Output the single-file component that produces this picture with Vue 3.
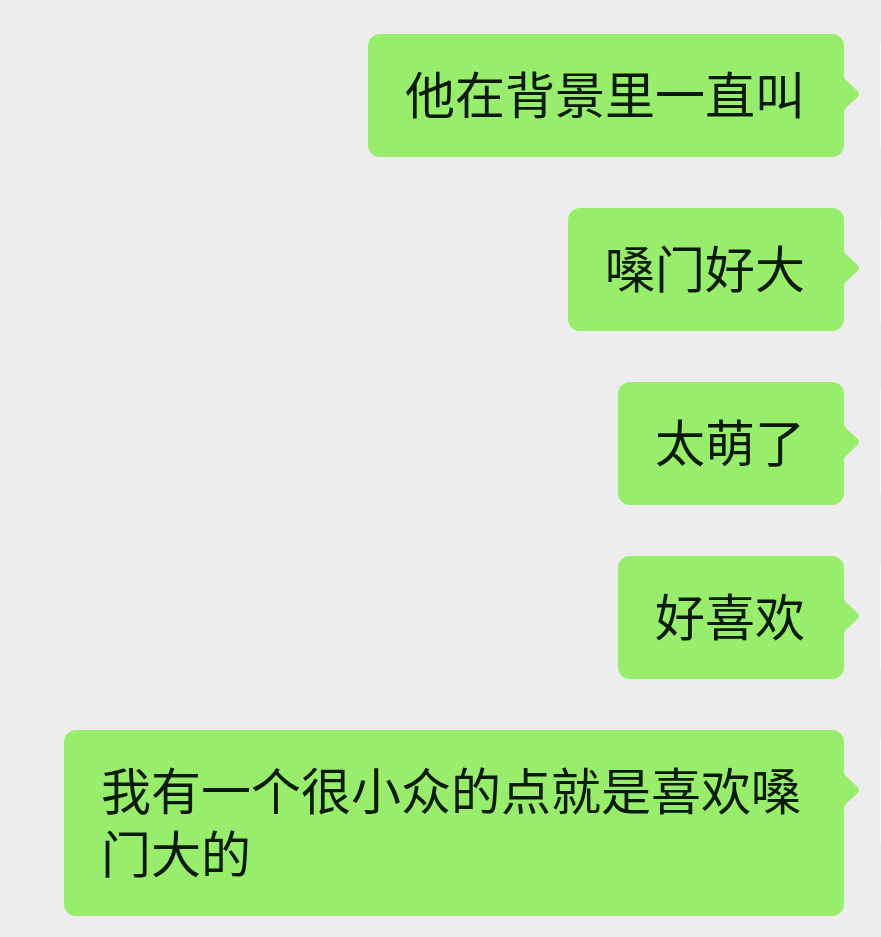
<!--
  App.vue - 채팅 메시지 목록

  - 내가 보낸 메시지를 오른쪽 정렬 말풍선으로 보여줌
  - 프로필 이미지는 화면 오른쪽 끝에 걸쳐 있음
-->
<template>
  <main class="chat" lang="zh-CN">
    <ul class="messages">
      <li v-for="message in messages" :key="message.id" class="row">
        <div class="bubble">
          <p class="text">{{ message.text }}</p>
          <!-- 말풍선 꼬리 -->
          <svg class="tail" viewBox="0 0 17 36" aria-hidden="true">
            <path d="M0 0 H1 C1 2 2 4 4 5 L14.5 15 Q17.5 18 14.5 21 L4 31 C2 32 1 34 1 36 H0 Z" />
          </svg>
        </div>
        <span class="avatar"></span>
      </li>
    </ul>
  </main>
</template>

<script setup>
// 위에서 아래로 표시되는 메시지
const messages = [
  { id: 1, text: '他在背景里一直叫' },
  { id: 2, text: '嗓门好大' },
  { id: 3, text: '太萌了' },
  { id: 4, text: '好喜欢' },
  { id: 5, text: '我有一个很小众的点就是喜欢嗓门大的' },
];
</script>

<style>
body {
  margin: 0;
  background: #ededed;
}
</style>

<style scoped>
.chat {
  box-sizing: border-box;
  min-height: 100vh;
  padding: 34px 0 21px 64px;
  overflow: hidden;
  background: #ededed;
  font-family: "Noto Sans CJK SC", sans-serif;
}
.messages {
  display: flex;
  flex-direction: column;
  gap: 51px;
  margin: 0;
  padding: 0;
  list-style: none;
}
.row {
  display: flex;
  justify-content: flex-end;
  align-items: flex-start;
  gap: 36px;
}
.bubble {
  position: relative;
  min-width: 0;
  padding: 27px 39px 33px 37px;
  border-radius: 12px;
  background: #98ee6c;
}
.text {
  margin: 0;
  color: #071a02;
  font-size: 50px;
  font-weight: 400;
  line-height: 63px;
  overflow-wrap: anywhere;
}
/* 꼬리는 첫 줄 높이에 맞춤 */
.tail {
  position: absolute;
  top: 42px;
  left: calc(100% - 1px);
  width: 17px;
  height: 36px;
  fill: #98ee6c;
}
/* 대부분 화면 밖으로 나가는 프로필 이미지 */
.avatar {
  flex: none;
  width: 122px;
  height: 122px;
  margin-right: -121px;
  border-radius: 12px;
  background: #f8f8f8;
}
</style>
